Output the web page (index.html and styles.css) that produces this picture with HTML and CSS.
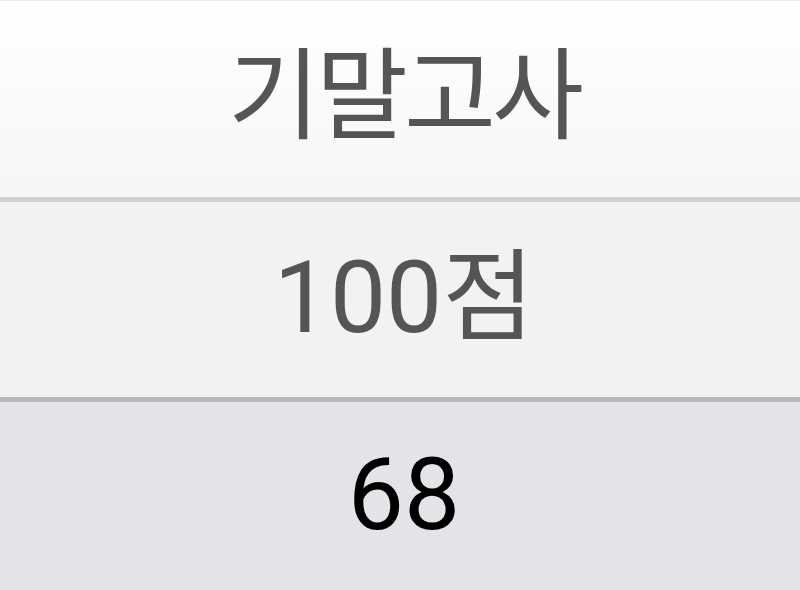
FILE: index.html
```html
<!DOCTYPE html>
<html lang="ko">
<head>
    <meta charset="UTF-8">
    <meta name="viewport" content="width=device-width, initial-scale=1.0">
    <title>기말고사</title>
    <link rel="stylesheet" href="styles.css">
</head>
<body>
    <div class="table">
        <div class="cell header">기말고사</div>
        <div class="cell total">100점</div>
        <div class="cell score">68</div>
    </div>
</body>
</html>
```

FILE: styles.css
```css
body {
    margin: 0;
    font-family: Roboto, "Noto Sans CJK KR", sans-serif;
    background-color: #e3e4e8;
}

.table {
    display: flex;
    flex-direction: column;
    height: 590px;
    border-top: 1px solid #ececec;
}

.cell {
    box-sizing: border-box;
    display: flex;
    justify-content: center;
    align-items: center;
    padding-left: 8px;
    font-size: 100px;
    line-height: 1;
    color: #555;
}

.header {
    height: 201px;
    padding-bottom: 4px;
    letter-spacing: -4px;
    background: linear-gradient(#fff, #f6f6f6);
    border-bottom: 5px solid #d0d0d0;
}

.total {
    height: 200px;
    padding-bottom: 4px;
    background-color: #f2f2f2;
    border-bottom: 5px solid #b9b9b9;
}

.score {
    flex: 1;
    padding-bottom: 4px;
    color: #000;
}
```
